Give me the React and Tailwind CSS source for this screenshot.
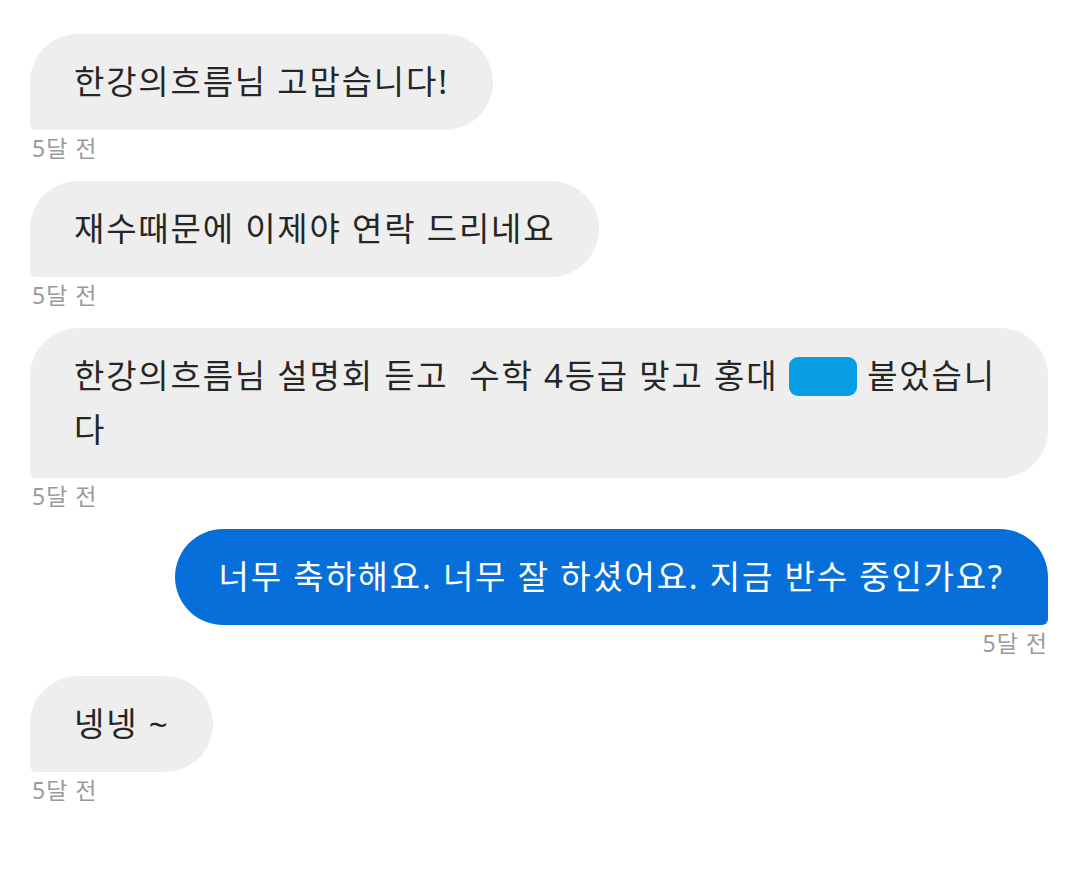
import React from 'react';

const messages = [
  { id: 1, mine: false, text: '한강의흐름님 고맙습니다!', time: '5달 전' },
  { id: 2, mine: false, text: '재수때문에 이제야 연락 드리네요', time: '5달 전' },
  { id: 3, mine: false, redacted: true, time: '5달 전' },
  { id: 4, mine: true, text: '너무 축하해요. 너무 잘 하셨어요. 지금 반수 중인가요?', time: '5달 전' },
  { id: 5, mine: false, text: '넹넹 ~', time: '5달 전' },
];

const Bubble = ({ msg }) => {
  const base = 'px-[44px] py-[21px] text-[33px] leading-[54px] tracking-[1.8px] rounded-[48px]';
  const stamp = 'mt-[3px] mb-[18px] text-[23px] leading-[30px] tracking-[1px] text-[#9a9a9a]';
  if (msg.mine) {
    return (
      <div className="flex flex-col items-end">
        <div className={`${base} rounded-br-[6px] bg-[#076fd9] text-white`}>{msg.text}</div>
        <div className={stamp}>{msg.time}</div>
      </div>
    );
  }
  return (
    <div className="flex flex-col items-start">
      <div className={`${base} rounded-bl-[6px] bg-[#eeeeee] text-[#262626] ${msg.redacted ? 'self-stretch' : ''}`}>
        {msg.redacted ? (
          <>
            한강의흐름님 설명회 듣고&nbsp; 수학 4등급 맞고 홍대{' '}
            <span className="inline-block w-[68px] h-[39px] align-[-8px] rounded-[9px] bg-[#069de4]"></span>{' '}
            붙었습니
            <br />
            다
          </>
        ) : (
          msg.text
        )}
      </div>
      <div className={`${stamp} pl-[2px]`}>{msg.time}</div>
    </div>
  );
};

const App = () => {
  return (
    <div
      className="w-[1079px] h-[887px] bg-white pt-[34px] pl-[30px] pr-[31px] overflow-hidden"
      style={{ fontFamily: '"Noto Sans", "Noto Sans CJK KR", sans-serif' }}
    >
      {messages.map((m) => (
        <Bubble key={m.id} msg={m} />
      ))}
    </div>
  );
};

export default App;
